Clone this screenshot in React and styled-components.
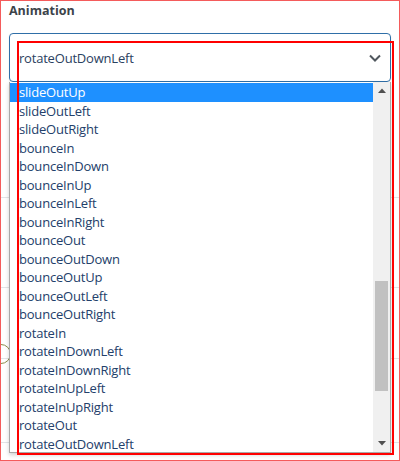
import React from "react";
import styled, { createGlobalStyle } from "styled-components";

const Global = createGlobalStyle`
  html, body { margin: 0; padding: 0; background: #fff; }
  body { font-family: "Open Sans", "Noto Sans", sans-serif; }
`;

const Frame = styled.div`
  position: relative;
  box-sizing: border-box;
  width: 400px;
  height: 461px;
  border: 1px solid #f45b5b;
  padding: 0 8px;
  overflow: hidden;
  background: #fff;
`;

const Label = styled.div`
  font-family: "Open Sans", sans-serif;
  font-weight: 700;
  font-size: 12.5px;
  line-height: 20px;
  color: #3c434a;
`;

const Select = styled.div`
  box-sizing: border-box;
  margin-top: 12px;
  height: 49px;
  border: 1px solid #2f6fa8;
  border-radius: 4px;
  display: flex;
  align-items: center;
  justify-content: space-between;
  padding: 0 8px 0 9px;
  font-size: 13px;
  letter-spacing: -0.2px;
  color: #2a4160;
  box-shadow: 0 1px 2px rgba(0,0,0,0.08);
`;

const Backdrop = styled.div`
  display: flex;
  flex-direction: column;
  margin: 0 -8px;
`;

const BackRow = styled.div`
  height: ${(p) => p.$h}px;
  border-bottom: 1px solid #e2e4e7;
  box-sizing: border-box;
`;

const Dropdown = styled.div`
  position: absolute;
  top: 81px;
  left: 8px;
  width: 382px;
  height: 371px;
  box-sizing: border-box;
  border: 1px solid #a9a9a9;
  border-top: none;
  background: #fff;
  display: flex;
  box-shadow: 0 2px 4px rgba(0,0,0,0.18);
`;

const List = styled.div`
  flex: 1;
  display: flex;
  flex-direction: column;
  padding-top: 1px;
`;

const Item = styled.div`
  height: 18.5px;
  line-height: 18.5px;
  padding-left: 9px;
  font-size: 13px;
  letter-spacing: -0.2px;
  color: ${(p) => (p.$active ? "#fff" : "#23406a")};
  background: ${(p) => (p.$active ? "#1e90ff" : "transparent")};
  white-space: nowrap;
`;

const Scrollbar = styled.div`
  width: 17px;
  background: #f0f0f0;
  display: flex;
  flex-direction: column;
  align-items: center;
`;

const Arrow = styled.div`
  height: 17px;
  width: 17px;
  display: flex;
  align-items: center;
  justify-content: center;
`;

const Track = styled.div`
  flex: 1;
  display: flex;
  flex-direction: column;
  align-items: center;
`;

const Thumb = styled.div`
  width: 13px;
  background: #c1c1c1;
`;

const Annotation = styled.div`
  position: absolute;
  left: 16px;
  top: 40px;
  width: 377px;
  height: 414px;
  box-sizing: border-box;
  border: 2px solid #ff0000;
  pointer-events: none;
`;

const Circle = styled.div`
  position: absolute;
  left: -10px;
  top: 343px;
  width: 20px;
  height: 20px;
  border-radius: 50%;
  border: 1px solid #8a8d4a;
  box-sizing: border-box;
`;

const items = [
  "slideOutUp",
  "slideOutLeft",
  "slideOutRight",
  "bounceIn",
  "bounceInDown",
  "bounceInUp",
  "bounceInLeft",
  "bounceInRight",
  "bounceOut",
  "bounceOutDown",
  "bounceOutUp",
  "bounceOutLeft",
  "bounceOutRight",
  "rotateIn",
  "rotateInDownLeft",
  "rotateInDownRight",
  "rotateInUpLeft",
  "rotateInUpRight",
  "rotateOut",
  "rotateOutDownLeft",
];

export default function App() {
  return (
    <>
      <Global />
      <Frame>
        <Label>Animation</Label>
        <Select>
          <span>rotateOutDownLeft</span>
          <svg width="14" height="10" viewBox="0 0 14 10">
            <path d="M2 2.5 L7 7.5 L12 2.5" fill="none" stroke="#50575e" strokeWidth="2" />
          </svg>
        </Select>
        <Backdrop>
          <BackRow $h={116} />
          <BackRow $h={90} />
          <BackRow $h={71} />
          <BackRow $h={84} />
        </Backdrop>
        <Circle />
        <Dropdown>
          <List>
            {items.map((it, i) => (
              <Item key={it} $active={i === 0}>
                {it}
              </Item>
            ))}
          </List>
          <Scrollbar>
            <Arrow>
              <svg width="8" height="5" viewBox="0 0 8 5">
                <path d="M0 5 L4 0.5 L8 5 Z" fill="#505050" />
              </svg>
            </Arrow>
            <Track>
              <div style={{ height: 182 }} />
              <Thumb style={{ height: 110 }} />
            </Track>
            <Arrow>
              <svg width="8" height="5" viewBox="0 0 8 5">
                <path d="M0 0 L8 0 L4 4.5 Z" fill="#505050" />
              </svg>
            </Arrow>
          </Scrollbar>
        </Dropdown>
        <Annotation />
      </Frame>
    </>
  );
}
